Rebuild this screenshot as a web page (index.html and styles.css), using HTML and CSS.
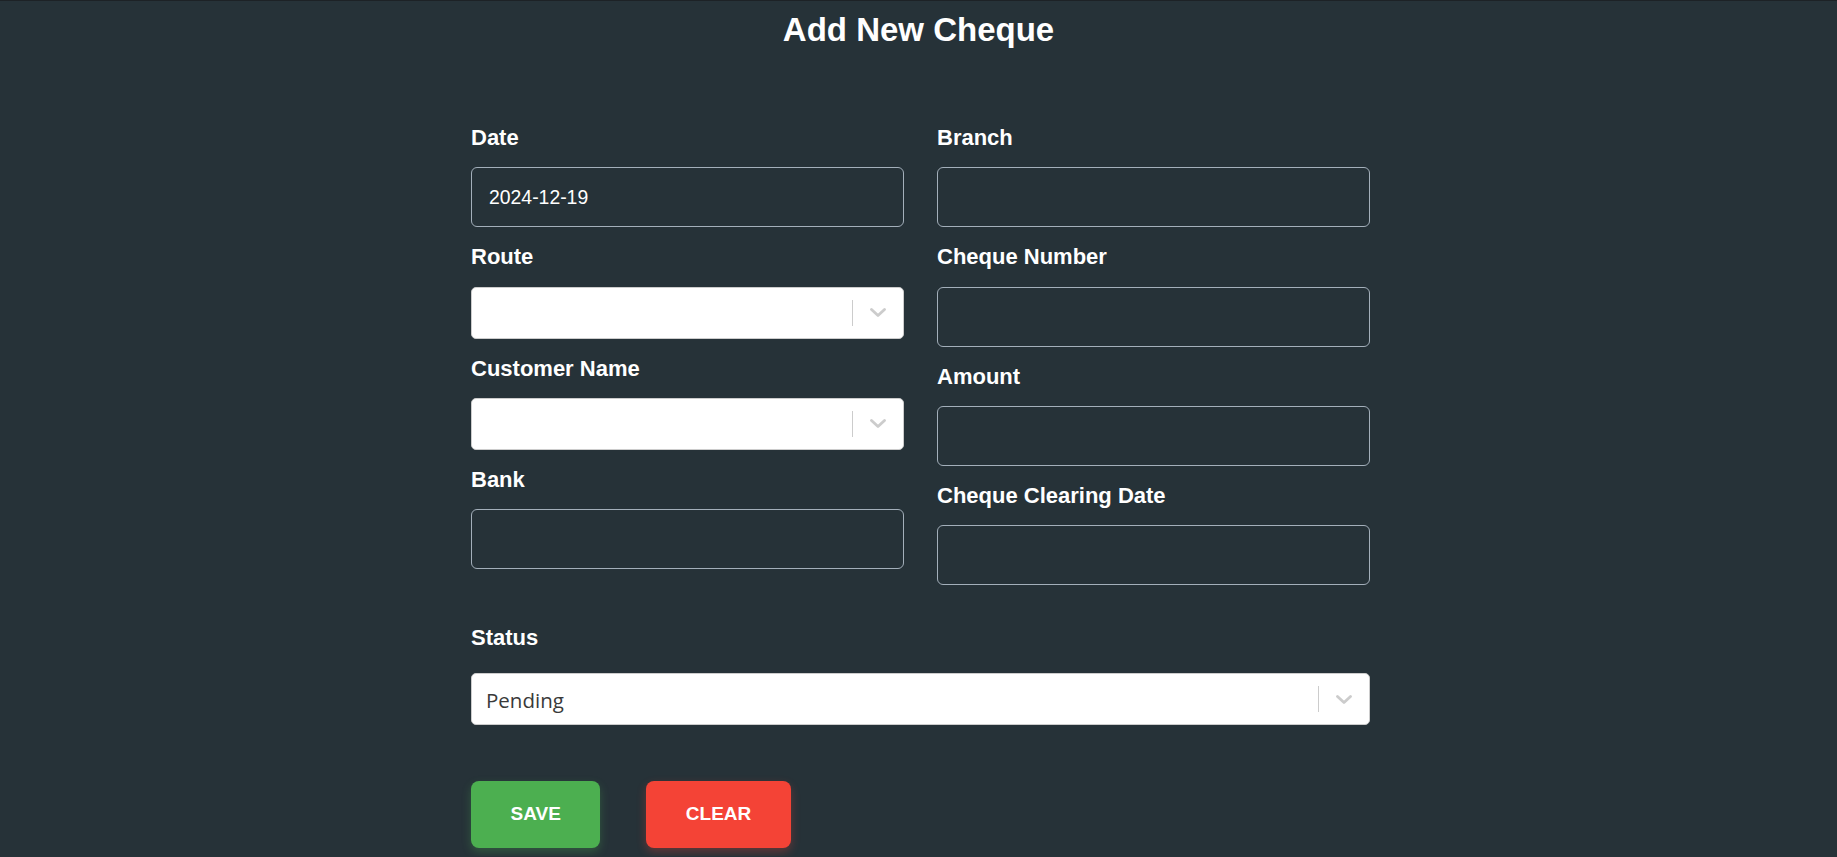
FILE: index.html
```html
<!DOCTYPE html>
<html lang="en">
<head>
<meta charset="utf-8">
<title>Add New Cheque</title>
<link rel="stylesheet" href="styles.css">
</head>
<body>
<div class="page">
  <h1 class="title">Add New Cheque</h1>
  <form class="form">
    <div class="grid">
      <div class="col">
        <div class="field">
          <label class="label">Date</label>
          <input class="input" type="text" value="2024-12-19">
        </div>
        <div class="field">
          <label class="label">Route</label>
          <div class="select">
            <div class="select-value"></div>
            <span class="select-sep"></span>
            <span class="select-ind"><svg width="16" height="9" viewBox="0 0 16 9"><polyline points="1.5,1.5 8,7.5 14.5,1.5" fill="none" stroke="#cccccc" stroke-width="2.8" stroke-linecap="round" stroke-linejoin="round"/></svg></span>
          </div>
        </div>
        <div class="field">
          <label class="label">Customer Name</label>
          <div class="select">
            <div class="select-value"></div>
            <span class="select-sep"></span>
            <span class="select-ind"><svg width="16" height="9" viewBox="0 0 16 9"><polyline points="1.5,1.5 8,7.5 14.5,1.5" fill="none" stroke="#cccccc" stroke-width="2.8" stroke-linecap="round" stroke-linejoin="round"/></svg></span>
          </div>
        </div>
        <div class="field">
          <label class="label">Bank</label>
          <input class="input" type="text" value="">
        </div>
      </div>
      <div class="col">
        <div class="field">
          <label class="label">Branch</label>
          <input class="input" type="text" value="">
        </div>
        <div class="field">
          <label class="label">Cheque Number</label>
          <input class="input" type="text" value="">
        </div>
        <div class="field">
          <label class="label">Amount</label>
          <input class="input" type="text" value="">
        </div>
        <div class="field">
          <label class="label">Cheque Clearing Date</label>
          <input class="input" type="text" value="">
        </div>
      </div>
    </div>
    <div class="status">
      <label class="label label-status">Status</label>
      <div class="select">
        <div class="select-value">Pending</div>
        <span class="select-sep"></span>
        <span class="select-ind"><svg width="16" height="9" viewBox="0 0 16 9"><polyline points="1.5,1.5 8,7.5 14.5,1.5" fill="none" stroke="#cccccc" stroke-width="2.8" stroke-linecap="round" stroke-linejoin="round"/></svg></span>
      </div>
    </div>
    <div class="actions">
      <button type="button" class="btn btn-save">SAVE</button>
      <button type="button" class="btn btn-clear">CLEAR</button>
    </div>
  </form>
</div>
</body>
</html>
```

FILE: styles.css
```css
html, body {
  margin: 0;
  padding: 0;
}
body {
  background: #263238;
  border-top: 1px solid #1d2226;
  font-family: "Liberation Sans", Arial, sans-serif;
  color: #ffffff;
  min-height: 856px;
  box-sizing: border-box;
}
.page {
  padding-top: 10px;
}
.title {
  margin: 0 0 76px 0;
  font-size: 33px;
  line-height: 38px;
  font-weight: bold;
  text-align: center;
  color: #ffffff;
}
.form {
  width: 899px;
  padding-left: 4px;
  margin: 0 auto;
}
.grid {
  display: grid;
  grid-template-columns: 433px 433px;
  column-gap: 33px;
  align-items: start;
}
.col {
  display: flex;
  flex-direction: column;
}
.field {
  display: flex;
  flex-direction: column;
  margin-bottom: 17.2px;
}
.label {
  display: block;
  font-size: 22px;
  line-height: 25px;
  font-weight: bold;
  color: #ffffff;
  margin-bottom: 17.2px;
}
.input {
  box-sizing: border-box;
  width: 100%;
  height: 60px;
  margin: 0;
  padding: 0 17px;
  border: 1px solid #a3afba;
  border-radius: 6px;
  background: transparent;
  color: #ffffff;
  font-family: "Liberation Sans", Arial, sans-serif;
  font-size: 19.4px;
  outline: none;
}
.select {
  box-sizing: border-box;
  display: flex;
  align-items: stretch;
  width: 100%;
  height: 52px;
  background: #ffffff;
  border: 1px solid #cccccc;
  border-radius: 5px;
}
.select-value {
  flex: 1;
  display: flex;
  align-items: center;
  padding-left: 14px;
  padding-top: 2px;
  font-family: "Open Sans", Lato, sans-serif;
  font-size: 20.5px;
  color: #3a3a3a;
}
.select-sep {
  width: 1px;
  background: #cccccc;
  margin: 12px 0;
}
.select-ind {
  width: 50px;
  display: flex;
  align-items: center;
  justify-content: center;
}
.status {
  margin-top: 22.5px;
}
.label-status {
  margin-bottom: 23px;
}
.actions {
  display: flex;
  gap: 46px;
  margin-top: 55.5px;
}
.btn {
  height: 67px;
  padding: 0 39.5px;
  border: none;
  border-radius: 8px;
  color: #ffffff;
  font-family: "Liberation Sans", Arial, sans-serif;
  font-size: 19px;
  font-weight: bold;
  cursor: pointer;
}
.btn-save {
  background: #4caf50;
  box-shadow: 0 4px 10px rgba(76, 175, 80, 0.3);
}
.btn-clear {
  background: #f44336;
  box-shadow: 0 4px 10px rgba(244, 67, 54, 0.3);
}
```
